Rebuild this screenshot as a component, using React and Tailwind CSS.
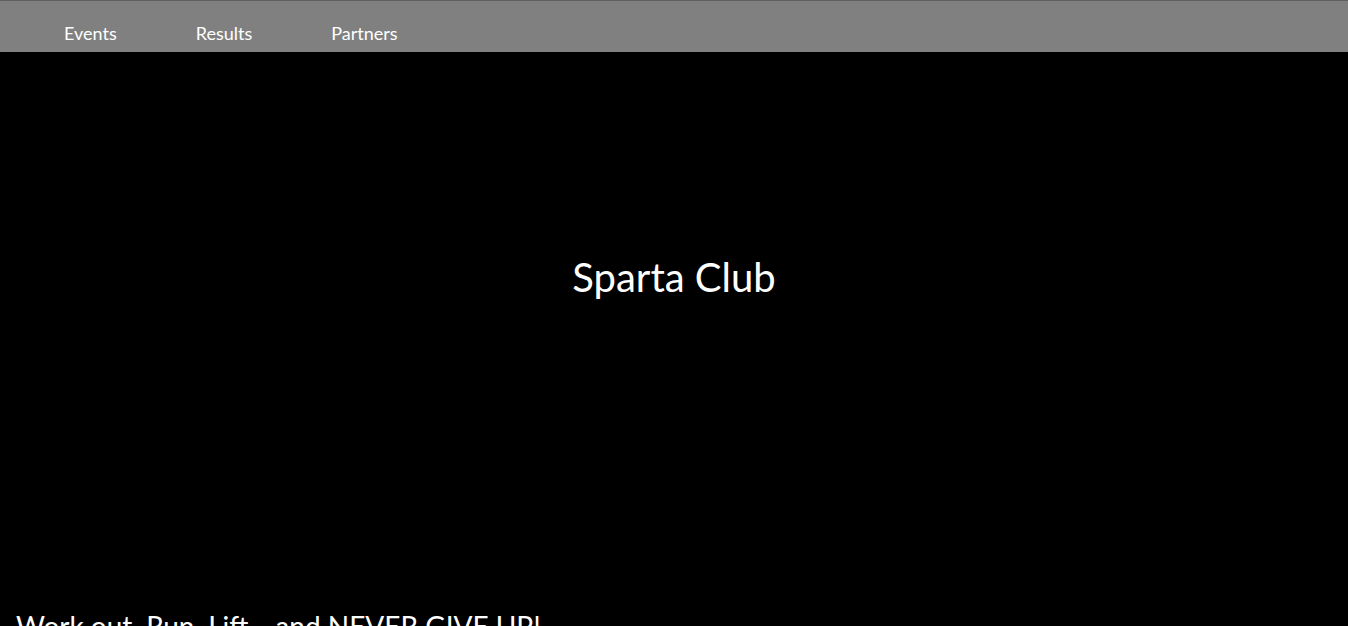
export default function App() {
  const links = ['Events', 'Results', 'Partners'];
  return (
    <div className="min-h-screen bg-black text-white" style={{ fontFamily: 'Lato, "Open Sans", sans-serif' }}>
      <nav className="h-[52px] bg-[#808080] border-t border-[#5f5f5f] flex items-center pt-[14px] pl-[64px] gap-[79px]">
        {links.map(l => (
          <a key={l} href="#" className="text-[18px] text-white">{l}</a>
        ))}
      </nav>
      <section className="h-[450px] flex items-center justify-center">
        <h1 className="text-[40px]">Sparta Club</h1>
      </section>
      <p className="mt-[104px] px-4 text-[28px] leading-[40px] whitespace-nowrap">Work out. Run. Lift... and NEVER GIVE UP!</p>
    </div>
  );
}
